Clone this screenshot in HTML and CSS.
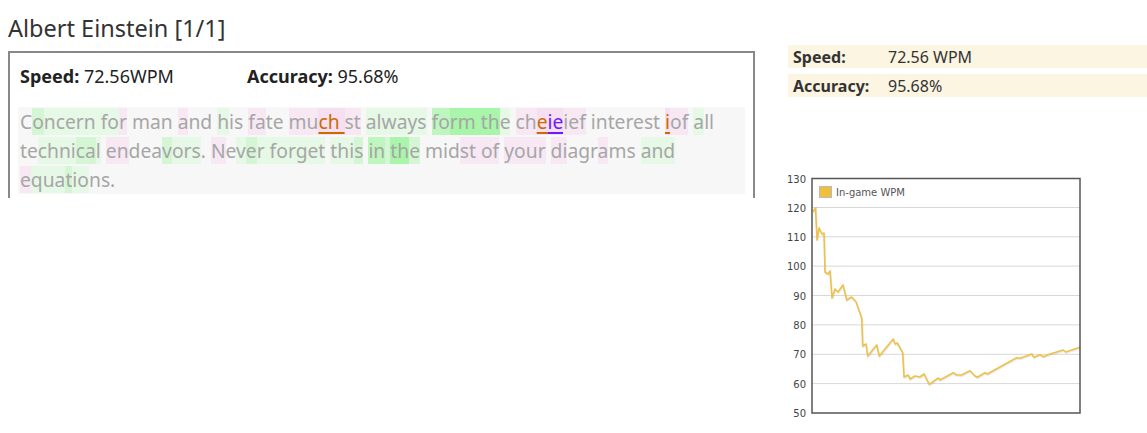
FILE: index.html
```html
<!DOCTYPE html>
<html>
<head>
<meta charset="utf-8">
<link rel="stylesheet" href="styles.css">
</head>
<body>
<div class="page">
  <div class="left">
    <h1 class="title">Albert Einstein [1/1]</h1>
    <div class="box">
      <div class="stats">
        <div class="stat"><b>Speed:</b> 72.56WPM</div>
        <div class="stat"><b>Accuracy:</b> 95.68%</div>
      </div>
      <div class="passage">C<span class="g2">o</span><span class="g1">ncern fo</span><span class="p1">r</span> man <span class="p1">a</span>nd <span class="g1">h</span>is <span class="p1">fa</span>te <span class="p1">mu</span><span class="p2 err">ch </span><span class="p1">st</span> <span class="g1">always</span> <span class="g3">fo</span><span class="g4">rm th</span><span class="g1">e</span> <span class="p1">ch</span><span class="p2 err">e</span><span class="p2 ext">ie</span><span class="p1">ief</span> interest <span class="p2 err">i</span><span class="p1">of</span> <span class="g1">a</span>ll te<span class="g1">chni</span><span class="g2">ca</span><span class="g1">l</span> <span class="p1">en</span>dea<span class="g2">v</span><span class="g1">ors</span>. <span class="p1">N</span>e<span class="g1">v</span><span class="g2">e</span><span class="g1">r forget</span> <span class="g1">thi</span><span class="g2">s</span> <span class="g3">in</span><span class="g2"> </span><span class="g4">th</span><span class="g2">e</span> mid<span class="p1">st of</span> <span class="p1">your</span> <span class="p1">di</span>agr<span class="p1">a</span>ms <span class="g1">and</span> <span class="p1">e</span><span class="g1">qua</span><span class="g2">t</span><span class="g1">io</span>ns.</div>
    </div>
  </div>
  <div class="right">
    <table class="summary">
      <tr><th>Speed:</th><td>72.56 WPM</td></tr>
      <tr><th>Accuracy:</th><td>95.68%</td></tr>
    </table>
    <svg class="chart" width="363" height="261" viewBox="0 0 363 261">
      <g transform="translate(4,0)">
        <g class="grid">
          <line x1="24" y1="35.5" x2="292" y2="35.5"/>
          <line x1="24" y1="64.8" x2="292" y2="64.8"/>
          <line x1="24" y1="94.1" x2="292" y2="94.1"/>
          <line x1="24" y1="123.5" x2="292" y2="123.5"/>
          <line x1="24" y1="152.9" x2="292" y2="152.9"/>
          <line x1="24" y1="182.3" x2="292" y2="182.3"/>
          <line x1="24" y1="211.6" x2="292" y2="211.6"/>
        </g>
        <g class="ylabels">
          <text x="18" y="10.5">130</text>
          <text x="18" y="39.5">120</text>
          <text x="18" y="68.8">110</text>
          <text x="18" y="98.1">100</text>
          <text x="18" y="127.5">90</text>
          <text x="18" y="156.9">80</text>
          <text x="18" y="186.3">70</text>
          <text x="18" y="215.6">60</text>
          <text x="18" y="245">50</text>
        </g>
        <polyline class="shadow" points="25,39.7 27.5,36 29,68 31,56 34,62 36,61 37,100 40,102 42,99 44,126 47,117 50,120 55,113 58.7,128 63.7,125 68,129.7 73.7,146 74.7,174 78,172 79.7,184 88.7,173 91.3,184 97,177 105.3,167 107,172 109.3,171 114.7,180.7 116,205 120.3,203 122,207 127,204 132,205 136,202 141.3,212.3 150.3,206 152,208 165.3,200.7 168.7,203 173.7,203 182,198.7 187,204 189.3,205.3 197,200.7 199.3,202 228.7,185.7 232,186.3 243.7,182 246,185.3 252,182.7 255.3,184.7 262,182 275.3,178 277.7,180 292,175.3"/>
        <polyline class="series" points="25,39.7 27.5,36 29,68 31,56 34,62 36,61 37,100 40,102 42,99 44,126 47,117 50,120 55,113 58.7,128 63.7,125 68,129.7 73.7,146 74.7,174 78,172 79.7,184 88.7,173 91.3,184 97,177 105.3,167 107,172 109.3,171 114.7,180.7 116,205 120.3,203 122,207 127,204 132,205 136,202 141.3,212.3 150.3,206 152,208 165.3,200.7 168.7,203 173.7,203 182,198.7 187,204 189.3,205.3 197,200.7 199.3,202 228.7,185.7 232,186.3 243.7,182 246,185.3 252,182.7 255.3,184.7 262,182 275.3,178 277.7,180 292,175.3"/>
        <path class="frame" d="M24 6.5 H292 V241 H24 Z"/>
        <rect class="legend-key" x="31.5" y="14.5" width="12" height="11"/>
        <text class="legend" x="48" y="24">In-game WPM</text>
      </g>
    </svg>
  </div>
</div>
</body>
</html>
```

FILE: styles.css
```css
html, body {
  margin: 0;
  padding: 0;
  background: #fff;
}
body {
  padding: 8px;
  font-family: "Noto Sans", "Open Sans", sans-serif;
  color: #333;
}
.page {
  display: flex;
  align-items: flex-start;
  gap: 33px;
}
.left {
  width: 747px;
  flex: none;
}
.title {
  margin: 6px 0 0 0;
  font-size: 23.5px;
  font-weight: normal;
  line-height: 28px;
  height: 37px;
  color: #333;
}
.box {
  border: 2px solid #888;
  border-bottom: none;
  padding: 11px 8px 4px 8px;
}
.stats {
  display: flex;
  font-size: 18px;
  line-height: 24px;
  color: #222;
  margin-left: 2px;
}
.stat:first-child {
  width: 227px;
}
.stat b {
  font-weight: bold;
}
.passage {
  margin-top: 19px;
  background: #f7f7f7;
  font-size: 19.25px;
  line-height: 29px;
  color: #a6a6a6;
  padding: 0 2px;
}
.g1 { background: #e6f8e6; }
.g2 { background: #d5f6d5; }
.g3 { background: #bff6bf; }
.g4 { background: #a9f5a9; }
.p1 { background: #f7e8f4; }
.p2 { background: #f5dff1; }
.err {
  color: #cc6a00;
  text-decoration: underline;
  text-decoration-thickness: 2px;
  text-underline-offset: 3px;
}
.ext {
  color: #6a1cff;
  text-decoration: underline;
  text-decoration-thickness: 2px;
  text-underline-offset: 3px;
}
.right {
  flex: 1;
  padding-top: 37px;
}
.summary {
  border-collapse: separate;
  border-spacing: 0 6px;
  width: 100%;
  margin-top: -6px;
  font-size: 16px;
  color: #333;
}
.summary th, .summary td {
  background: #fcf5e2;
  height: 23px;
  padding: 0;
  text-align: left;
}
.summary th {
  width: 95px;
  padding-left: 5px;
  font-weight: bold;
}
.chart {
  display: block;
  margin-top: 69px;
  margin-left: -4px;
}
.grid line {
  stroke: #d8d8d8;
  stroke-width: 1;
}
.ylabels text {
  font-family: "DejaVu Sans", sans-serif;
  font-size: 10px;
  fill: #444;
  text-anchor: end;
}
.frame {
  fill: none;
  stroke: #555;
  stroke-width: 1.5;
}
.series {
  fill: none;
  stroke: #eec14a;
  stroke-width: 1.6;
  stroke-linejoin: round;
}
.shadow {
  fill: none;
  stroke: rgba(0,0,0,0.08);
  stroke-width: 2;
  transform: translate(0.5px, 1px);
}
.legend-key {
  fill: #efc03d;
  stroke: #bbb;
  stroke-width: 1;
}
.legend {
  font-family: "DejaVu Sans", sans-serif;
  font-size: 10px;
  fill: #555;
}
```
